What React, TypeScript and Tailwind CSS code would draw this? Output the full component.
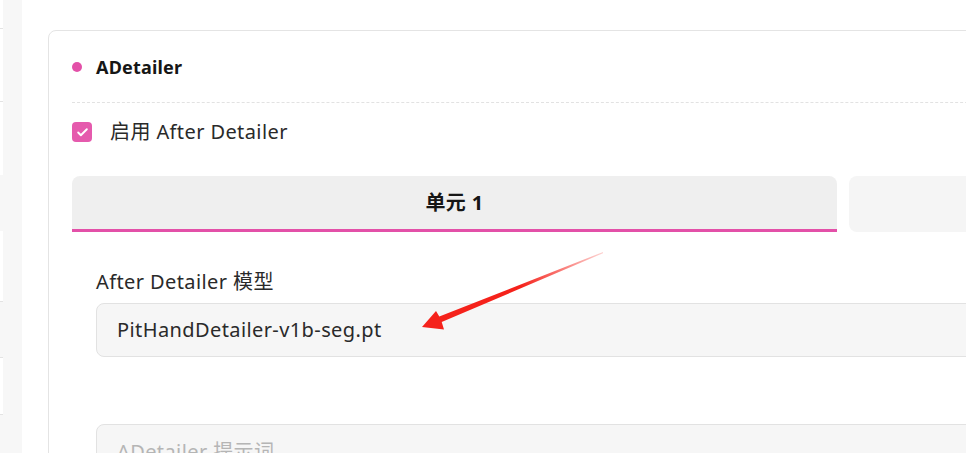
import { Check } from 'lucide-react'

const font = { fontFamily: '"Noto Sans", "Noto Sans CJK SC", sans-serif' }

function SideStrip() {
  return (
    <div className="flex h-full w-[22px] shrink-0 bg-[#f7f7f7]">
      <div className="flex h-full w-[3px] flex-col">
        <div className="h-[29px] border-b border-[#e3e3e3] bg-white" />
        <div className="h-[73px] border-b border-[#e3e3e3] bg-white" />
        <div className="h-[73px] bg-white" />
        <div className="h-[56px]" />
        <div className="h-[71px] border-b border-[#e3e3e3] bg-white" />
        <div className="h-[55px]" />
        <div className="h-[58px] border-t border-b border-[#e3e3e3] bg-white" />
      </div>
    </div>
  )
}

function Arrow() {
  return (
    <svg
      className="pointer-events-none absolute left-0 top-0"
      width={966}
      height={453}
      viewBox="0 0 966 453"
    >
      <defs>
        <linearGradient id="tail" x1="602" y1="252" x2="520" y2="286" gradientUnits="userSpaceOnUse">
          <stop offset="0" stopColor="#f5221b" stopOpacity="0.2" />
          <stop offset="1" stopColor="#f5221b" />
        </linearGradient>
      </defs>
      <polygon
        points="603,252 439.3,316.5 436,311 422,327 444,329.5 441.7,322.1 603,253.2"
        fill="url(#tail)"
      />
    </svg>
  )
}

export default function App() {
  return (
    <div
      className="relative flex h-[453px] w-[966px] overflow-hidden bg-white text-[#1f1f1f]"
      style={font}
    >
      <SideStrip />
      <main className="flex-1 pl-[26px] pt-[30px]">
        <section className="w-[1000px] rounded-t-lg border border-[#e4e4e4] pl-[23px] pr-6 pb-10">
          <header className="flex h-[72px] items-center gap-[14px] border-b border-dashed border-[#e2e2e2]">
            <span className="h-[10px] w-[10px] rounded-full bg-[#e350a8]" />
            <h2 className="text-[18px] font-bold leading-none tracking-[0.2px] text-[#161616]">ADetailer</h2>
          </header>

          <label className="flex h-[58px] items-center gap-[18px]">
            <span className="flex h-[20px] w-[20px] items-center justify-center rounded-[4px] bg-[#e55aad]">
              <Check className="h-[13px] w-[13px] text-white" strokeWidth={3.5} />
            </span>
            <span className="text-[20px] tracking-[0.4px] text-[#2a2a2a]">启用 After Detailer</span>
          </label>

          <div className="mt-[15px] flex gap-3">
            <button className="flex h-[56px] w-[765px] shrink-0 items-center justify-center rounded-t-lg border-b-[3px] border-[#e350a8] bg-[#efefef] text-[20px] font-bold tracking-[0.4px] text-[#161616]">
              单元 1
            </button>
            <button className="h-[56px] w-[200px] shrink-0 rounded-lg bg-[#f5f5f5]" />
          </div>

          <div className="px-6">
            <p className="mt-[36px] text-[20px] leading-[28px] tracking-[0.4px] text-[#2a2a2a]">After Detailer 模型</p>
            <div className="mt-[7px] flex h-[54px] items-center rounded-lg border border-[#e2e2e2] bg-[#f6f6f6] px-5 text-[20px] tracking-[0.4px] text-[#2a2a2a]">
              PitHandDetailer-v1b-seg.pt
            </div>

            <div className="mt-[67px] flex h-[80px] items-start rounded-lg border border-[#e2e2e2] bg-[#f6f6f6] px-5 pt-[12px] text-[20px] tracking-[0.4px] text-[#b5b5b5]">
              ADetailer 提示词
            </div>
          </div>
        </section>
      </main>
      <Arrow />
    </div>
  )
}
